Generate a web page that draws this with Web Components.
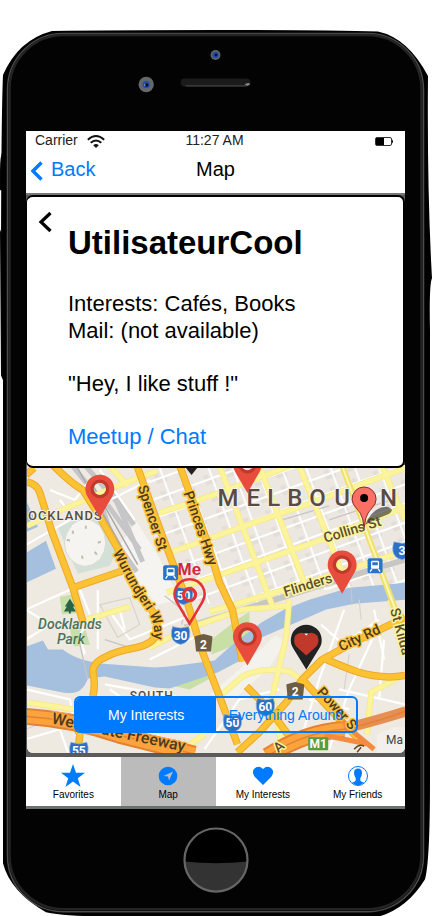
<!DOCTYPE html>
<html lang="en">
<head>
<meta charset="utf-8">
<meta name="viewport" content="width=device-width, initial-scale=1">
<title>Map</title>
<style>
body { margin: 0; background: #fff; font-family: "Liberation Sans", Arial, sans-serif; color: #000; }
</style>
</head>
<body>
<phone-shell>
  <status-bar carrier="Carrier" time="11:27 AM"></status-bar>
  <nav-bar back="Back">Map</nav-bar>
  <profile-card name="UtilisateurCool">
    <span slot="facts">Interests: Cafés, Books<br>Mail: (not available)</span>
    <span slot="quote">"Hey, I like stuff !"</span>
    <span slot="action">Meetup / Chat</span>
  </profile-card>
  <city-map>
    <segmented-control>
      <segment-button selected>My Interests</segment-button>
      <segment-button>Everything Around</segment-button>
    </segmented-control>
  </city-map>
  <tab-bar>
    <tab-item icon="star">Favorites</tab-item>
    <tab-item icon="locate" current>Map</tab-item>
    <tab-item icon="heart">My Interests</tab-item>
    <tab-item icon="person">My Friends</tab-item>
  </tab-bar>
</phone-shell>

<script>
const define = (name, render) => customElements.define(name, class extends HTMLElement {
  connectedCallback() {
    if (this.shadowRoot) return;
    this.attachShadow({ mode: "open" }).innerHTML = render(this);
  }
});

define("phone-shell", () => `
<style>
  :host { display: block; position: relative; }
  .casing { position: absolute; inset: 0; width: 100%; height: 100%; }
  .body { position: relative; display: flex; flex-direction: column; padding: 0 28px 0 26px; }
  .top, .bottom { display: flex; justify-content: center; }
  .top { height: 131px; }
  .screen { display: flex; flex-direction: column; background: #5b5b5b; border-bottom: 3px solid #6b716f; }
  .bottom { height: 108px; align-items: flex-start; }
  .home { margin-top: 18px; padding: 0; border: 0; background: none; width: 66px; height: 66px; }
  svg { display: block; }
</style>
<svg class="casing" viewBox="0 0 433 916" preserveAspectRatio="none" aria-hidden="true">
  <path d="M0 170 Q0 155 3 150 V190 H0ZM0 229 L4 240 V382 L1 375Z" fill="#050505"/>
  <path d="M52 31 Q110 30 216 30 Q330 30 378 31.500 Q408 38 428 76 Q427 190 432 278 Q429 284 430 330 V780 Q430 860 425 878 Q408 906 380 915 H100 Q66 915 46 911 Q10 890 3 862 V380 L1 290 Q1 120 3 75 Q18 40 52 31Z" fill="#000"/>
  <rect x="7.500" y="33.500" width="416" height="877" rx="56" fill="#040303" stroke="#4c4c4c" stroke-width="1.500"/>
  <rect x="9.500" y="35" width="412" height="873" rx="54" fill="none" stroke="#242424" stroke-width="2.500"/>
</svg>
<div class="body">
  <div class="top">
    <svg width="380" height="131" viewBox="26 0 380 131" aria-hidden="true">
      <circle cx="216" cy="55" r="5" fill="#606266"/><circle cx="216" cy="55" r="3.200" fill="#2450a8"/><circle cx="216.500" cy="55" r="1.500" fill="#050d22"/>
      <circle cx="146.500" cy="84.500" r="7.700" fill="#66676a"/><circle cx="146.500" cy="84.500" r="3.800" fill="#2450a8"/><circle cx="147" cy="85" r="1.800" fill="#050d22"/><circle cx="145" cy="85" r=".8" fill="#8fb4ee"/>
      <rect x="181" y="78.500" width="70" height="8" rx="4" fill="#1b1b1b"/>
      <path d="M186 86H247" stroke="#444" stroke-width="1.200"/><path d="M245 84l4-1 2 1-3 2z" fill="#888"/>
    </svg>
  </div>
  <div class="screen"><slot></slot></div>
  <div class="bottom">
    <button class="home" aria-label="Home">
      <svg width="66" height="66" viewBox="0 0 66 66"><circle cx="33" cy="33" r="31.500" fill="#000"/><path d="M1.500 34.500Q33 38 64.500 34.500A31.500 31.500 0 0 1 1.500 34.500Z" fill="#333"/><circle cx="33" cy="33" r="31.500" fill="none" stroke="#666" stroke-width="2.200"/></svg>
    </button>
  </div>
</div>`);

define("status-bar", el => `
<style>
  :host { display: grid; grid-template-columns: 1fr auto 1fr; align-items: center; height: 18px; padding: 0 11px 0 9px; background: #fff; font-size: 14px; line-height: 18px; color: #222; }
  .left { display: flex; align-items: center; gap: 9px; }
  .battery { justify-self: end; padding-top: 2px; }
  svg { display: block; }
</style>
<span class="left">${el.getAttribute("carrier")}
  <svg width="18" height="16" viewBox="0 -2 18 16" aria-hidden="true"><g fill="none" stroke="#111" stroke-width="1.900"><path d="M.8 5.800Q9-1.600 17.200 5.800"/><path d="M3.700 8.800Q9 4 14.300 8.800"/></g><path d="M6.200 11.200Q9 8.600 11.800 11.200L9 14Z" fill="#111"/></svg>
</span>
<span>${el.getAttribute("time")}</span>
<svg class="battery" width="19" height="9" viewBox="0 0 19 9" aria-hidden="true"><rect x=".5" y=".5" width="16" height="8" rx="1.500" fill="#fff" stroke="#333"/><path d="M1 1h8v7H1z"/><path d="M17 2.500q2 2 0 4z"/></svg>`);

define("nav-bar", el => `
<style>
  :host { display: grid; grid-template-columns: 1fr auto 1fr; align-items: start; height: 38px; padding: 6px 5px 0; box-sizing: content-box; background: #fff; font-size: 20px; line-height: 28px; border-bottom: 2px solid #777; }
  a { display: flex; align-items: center; gap: 8px; color: #007aff; text-decoration: none; }
  h1 { margin: 0; font: inherit; }
  svg { display: block; margin-top: 4px; }
</style>
<a href="#back"><svg width="12" height="20" viewBox="0 0 12 20" aria-hidden="true"><path d="M10.500 1.500L2 10l8.500 8.500" fill="none" stroke="#007aff" stroke-width="3.400"/></svg>${el.getAttribute("back")}</a>
<h1><slot></slot></h1>`);

define("profile-card", el => `
<style>
  :host { display: grid; grid-template-columns: 41px 1fr; position: relative; z-index: 1; margin-bottom: -3px; border: 2px solid #000; border-left-width: 1px; border-radius: 7px; background: #fff; font-size: 22px; line-height: 27px; padding-bottom: 16px; }
  button { align-self: start; justify-self: start; margin: 14px 0 0 11px; padding: 0; border: 0; background: none; }
  svg { display: block; }
  .text { display: flex; flex-direction: column; gap: 26px; padding-top: 28px; }
  h2 { margin: 0 0 3px; font-size: 33px; line-height: 36px; }
  a { color: #007aff; text-decoration: none; }
  p { margin: 0; }
</style>
<button aria-label="Close profile"><svg width="14" height="22" viewBox="0 0 14 22"><path d="M12.500 2L3 11l9.500 9" fill="none" stroke="#000" stroke-width="3.200"/></svg></button>
<div class="text">
  <h2>${el.getAttribute("name")}</h2>
  <p><slot name="facts"></slot></p>
  <p><slot name="quote"></slot></p>
  <a href="#chat"><slot name="action"></slot></a>
</div>`);

const orangeRoads = [
  "M27 482Q37 484 40 493L52 532L73 588L83 622",
  "M26 475L34 468",
  "M53 465Q72 484 83 490L100 517L117 547L133 583L150 607Q160 622 157 634Q154 644 137 648Q115 652 107 657Q93 663 93 672Q96 685 93 697",
  "M73 588L123 571",
  "M137 465L163 537L173 563L187 600L202 650L220 697L238 745",
  "M180 465L207 540L220 583L233 610L243 662",
  "M406 618Q385 628 360 640L323 660L303 680L287 703L260 733L238 753",
  "M325 659Q345 668 360 673Q385 680 406 676",
  "M303 680L343 723L358 738",
  "M247 687L270 710L296 745",
  "M71 718L80 735L78 753"
].map(d => `<path d="${d}"/>`).join("");

const yellowRoads = [
  "M27 526L60 511L120 485L157 471", "M110 466L128 486", "M160 513L220 493L293 465", "M173 552L220 535L320 500L406 468",
  "M167 593L215 577L323 540L406 507", "M210 612L310 583L406 551", "M87 620L130 607",
  "M220 466L273 606", "M260 466L307 588", "M300 466L343 573", "M383 466L406 520",
  "M290 600L287 637L273 697L283 750", "M220 697L243 677Q263 667 290 672L310 685",
  "M150 648L185 630L243 610L290 606", "M390 600L406 622", "M406 675L372 693L368 735", "M26 703L75 710", "M180 753L205 735"
].map(d => `<path d="${d}"/>`).join("");

const whiteRoads = [
  "M26 610L70 590L120 575", "M26 545L70 520", "M98 590V650", "M80 590L90 615", "M26 640L50 625L26 610", "M110 612L130 640L200 612", "M120 610L125 630",
  "M150 660L200 635", "M85 655L80 635L90 620", "M105 685L190 700", "M120 697L110 690", "M26 690L70 700L80 753", "M26 740L60 730L68 753",
  "M50 490L75 500L90 480", "M100 470L135 520", "M110 500L150 480", "M60 500L75 520",
  "M300 745L320 680L345 610", "M330 750L350 690L380 625", "M350 640L380 620", "M375 610L385 660", "M340 690L406 705", "M322 625L350 650", "M205 750L240 700L280 690", "M310 700L350 710", "M385 640L380 700"
].map(d => `<path d="${d}"/>`).join("");

const redPin = (x, y) => `<use href="#pin" x="${x}" y="${y}"/>`;
const shield = (x, y, n) => `<g transform="translate(${x} ${y})"><path d="M-8 -8Q0 -5 8 -8Q10 -3 9 2Q8 8 0 10Q-8 8 -9 2Q-10 -3 -8 -8Z" fill="#2f70c4" stroke="#8eb4e2" stroke-width=".7"/><text y="5" text-anchor="middle" class="num">${n}</text></g>`;
const routeTwo = (x, y) => `<g transform="translate(${x} ${y})"><path d="M-6 -8L0 -9.500L6 -8L9 -7L7.500 8H-7.500L-9 -7Z" fill="#6c5d43"/><text y="5" text-anchor="middle" class="num">2</text></g>`;
const station = (x, y) => `<g transform="translate(${x} ${y})"><rect x="-7.500" y="-7.500" width="15" height="15" rx="2" fill="#2774c8"/><rect x="-4" y="-5" width="8" height="8" rx="1.500" fill="#fff"/><path d="M-2.800 -3.500h5.600v3h-5.600z" fill="#2774c8"/><path d="M-3 3L-5 6M3 3L5 6" stroke="#fff" stroke-width="1.300"/></g>`;

define("city-map", () => `
<style>
  :host { display: grid; margin: 0 0 4px 1px; border-radius: 0 0 6px 6px; overflow: hidden; background: #eeeae2; }
  svg { grid-area: 1 / 1; display: block; width: 100%; height: auto; }
  .controls { grid-area: 1 / 1; align-self: end; justify-self: center; width: 75%; margin-bottom: 20px; z-index: 1; }
  text { font-family: Roboto, "Noto Sans", sans-serif; }
  .road { font-size: 14px; font-weight: 500; fill: #4c3a1c; paint-order: stroke; stroke-width: 3px; stroke: #fdc440; stroke-linejoin: round; }
  .pale { stroke: #fbf3a0; fill: #5c4e2c; }
  .place { font-weight: 500; fill: #574b43; paint-order: stroke; stroke: #f5f2ea; stroke-width: 2px; }
  .num { font-size: 12px; font-weight: 700; fill: #fff; }
  .me { font: 700 17px "Liberation Sans", Arial, sans-serif; fill: #d1263b; }
</style>
<svg viewBox="27 465 379 289" role="img" aria-label="Map of Melbourne">
  <defs>
    <pattern id="blocks" width="23" height="18" patternUnits="userSpaceOnUse" patternTransform="translate(220 466) rotate(-20)">
      <rect width="23" height="18" fill="#ece8e1"/><path d="M4 4h5v4h6v6H4z" fill="#e3ded7"/><path d="M0 9H23M12 0V18" stroke="#fff" stroke-width="1.800" fill="none"/>
    </pattern>
    <g id="pin"><path fill-rule="evenodd" d="M0 44L-12.500 22.500A14.500 14.500 0 1 1 12.500 22.500ZM0 8.500a6.500 6.500 0 1 0 .01 0Z" fill="#e74c3c"/><circle cy="15" r="7.800" fill="none" stroke="#c0392b" stroke-width="3.200"/></g>
    <path id="wurundjeri" d="M113 553L133 590L148 612Q156 624 154 640"/>
  </defs>
  <rect x="26" y="464" width="381" height="290" fill="#eeeae2"/>
  <path d="M140 465H406V590L310 590L240 610L187 600Z" fill="url(#blocks)"/>
  <path d="M137 522L158 555L180 600L158 605L135 580L120 545Z" fill="#f5f4f0"/>
  <path d="M58 528L80 517L100 520L116 553L110 566L78 574Z" fill="#d3e0d8"/>
  <path d="M60 597L76 594L82 613L62 615ZM70 629L86 631L90 645L74 647Z" fill="#c9dfaa"/>
  <path d="M172 686L200 673L216 676L190 690ZM212 640L238 620L250 612V640L212 655Z" fill="#c8dfa6"/>
  <path d="M26 500L38 527L26 532ZM26 553L46 541L56 569L26 583Z" fill="#a5bfde"/>
  <path d="M26 647L43 641L48 650L63 650Q75 660 100 664L155 668L170 667L215 661L232 646L262 623L285 610L310 600L350 588L385 585L406 583V600L355 604L327 610L290 626L262 638L243 660L218 673L170 689L155 688L105 677L88 679Q82 697 63 693L26 686Z" fill="#a5bfde"/>
  <path d="M210 695L240 670L276 636L286 642L270 668L235 700Z" fill="#f4f2ec"/>
  <path d="M72 525Q85 513 100 526Q112 543 100 560Q84 574 70 559Q58 543 72 525Z" fill="#f5f4f0" stroke="#d8d8cf"/>
  <path d="M73 531v3M86 526v3M101 542l-3 1M95 552l2 3M82 556l1 3M67 540l3 1" stroke="#b9c0a8" stroke-width="2"/>
  <g fill="none" stroke="#c6c6c8"><path d="M72 465L100 500L112 537L137 572M85 465L117 502L143 562M100 475L134 525M108 505L140 550" stroke-width="5"/><path d="M76 465L128 558M90 480L138 565" stroke="#aaaaae" stroke-width="1.500"/></g>
  <g fill="none" stroke="#c8c6c2"><path d="M185 628L260 605L320 586L406 560" stroke-width="6"/><path d="M165 596L185 612L182 625M330 520L360 510L400 498M105 640L130 648M353 605L352 588M80 645L88 680M283 520L330 506" stroke-width="1.300"/></g>
  <g fill="none" stroke="#fff" stroke-width="2.200">${whiteRoads}</g>
  <g fill="none" stroke="#d8d3ca" stroke-width="1.200"><path d="M100 605L130 598L140 625L118 638ZM320 720L340 705M350 655L345 690M360 600L362 620M26 730L50 720M115 740L140 715"/></g>
  <g fill="none" stroke="#f6e985" stroke-width="6">${yellowRoads}</g>
  <g fill="none" stroke="#fcf49a" stroke-width="4.500">${yellowRoads}</g>
  <path d="M343 466L400 620" stroke="#efe06e" stroke-width="6"/><path d="M343 466L400 620" stroke="#fbf7b4" stroke-width="2"/>
  <g fill="none" stroke="#eca92f" stroke-width="7.500" stroke-linejoin="round">${orangeRoads}</g>
  <g fill="none" stroke="#fdc232" stroke-width="5.500" stroke-linejoin="round">${orangeRoads}</g>
  <g fill="none"><path d="M26 717Q75 720 120 736L195 755M268 757Q305 733 345 730" stroke="#e58132" stroke-width="17"/><path d="M335 732Q375 722 407 712" stroke="#e58f55" stroke-width="10"/><path d="M26 717Q75 720 120 736L195 755M268 757Q305 733 345 730" stroke="#fba33c" stroke-width="13"/><path d="M26 717Q75 720 120 736L195 755M268 757Q305 733 345 730Q380 722 406 712" stroke="#e58132" stroke-width="1.500"/><path d="M340 718L358 736L375 750M325 736L370 745" stroke="#f58b3e" stroke-width="5"/></g>
  <path d="M378 735L396 728H406V754H378Z" fill="#f3f0ec" opacity=".85"/>

  <text class="place" x="28" y="520" font-size="13" letter-spacing="1">OCKLANDS</text>
  <text class="place" x="218 247 268 288 310 335 381" y="506" font-size="24" font-weight="700">MELBOUN</text>
  <text class="place" x="130" y="701" font-size="12" letter-spacing="1">SOUTH</text>
  <text x="70" y="629" text-anchor="middle" font-size="14" font-weight="500" font-style="italic" fill="#4b7358">Docklands<tspan x="71" dy="15">Park</tspan></text>
  <path d="M70 599L75 607H73L76 612H71V614H69V612H64L67 607H65Z" fill="#286548"/>
  <text class="road" transform="translate(138 487) rotate(72)">Spencer St</text>
  <text class="road" transform="translate(184 493) rotate(71)">Princes Hwy</text>
  <text class="road"><textPath href="#wurundjeri">Wurundjeri Way</textPath></text>
  <text class="road pale" transform="translate(326 543) rotate(-17)">Collins St</text>
  <text class="road pale" transform="translate(286 597) rotate(-17)">Flinders</text>
  <text class="road" transform="translate(342 652) rotate(-25)">City Rd</text>
  <text class="road" transform="translate(317 693) rotate(48)">Power S</text>
  <text class="road pale" transform="translate(391 610) rotate(75)">St Kilda</text>
  <text class="road" transform="translate(51 724) rotate(12)" style="stroke:#fba33c;font-size:16px">West Gate Freeway</text>
  <text class="road pale" transform="translate(279 754) rotate(-40)">A</text><path d="M355 750Q360 744 365 747M358 753L362 748" fill="none" stroke="#6b4a1c" stroke-width="1.500"/>
  <text x="387" y="745" font-size="12" fill="#444">Ma</text>
  ${station(171, 573)}${station(376, 566)}
  ${shield(184, 595, "50")}${shield(181, 635, "30")}${shield(79, 751, "55")}${shield(266, 707, "60")}${shield(233, 723, "50")}${shield(403, 550, "3")}
  ${routeTwo(204, 644)}${routeTwo(296, 692)}
  <rect x="309" y="738" width="20" height="13" rx="1" fill="#5a9b3c"/><text x="319" y="749" text-anchor="middle" class="num">M1</text>

  ${redPin(100, 474)}${redPin(248, 449)}${redPin(343, 550)}${redPin(248, 622)}
  <path d="M184 465H200L192 475Z" fill="#222"/>
  <path d="M307 670L294 649A15.500 15.500 0 1 1 320 649Z" fill="#222"/>
  <path d="M307 656L297 647Q293 642 296 636Q301 631 307 635Q313 631 318 636Q321 642 317 647Z" fill="#c0392b"/><path d="M305 634h4l-2 2z" fill="#fff"/>
  <path d="M366 525Q374 506 389 507Q397 510 388 515Q376 519 366 525Z" fill="#333" opacity=".65"/>
  <path d="M365 528L363.500 519Q362 513 357 508A12 12 0 1 1 373 508Q368 513 366.500 519Z" fill="#fb7065" stroke="#8c2c28"/><circle cx="365" cy="498" r="4"/>
  <path d="M190 624L177 602A15 15 0 1 1 203 602Z" fill="none" stroke="#e53238" stroke-width="2.600"/><circle cx="190" cy="595" r="6" fill="none" stroke="#e53238" stroke-width="3.200"/>
  <text class="me" x="178" y="575">Me</text>
</svg>
<div class="controls"><slot></slot></div>`);

define("segmented-control", () => `
<style>
  :host { display: flex; border: 2px solid #007aff; border-radius: 6px; overflow: hidden; }
</style><slot></slot>`);

define("segment-button", el => `
<style>
  :host { flex: 1; display: flex; }
  button { flex: 1; height: 33px; padding: 0; border: 0; background: none; font: 14px "Liberation Sans", Arial, sans-serif; white-space: nowrap; color: #007aff; }
  :host([selected]) button { background: #007aff; color: #fff; }
</style><button aria-pressed="${el.hasAttribute("selected")}"><slot></slot></button>`);

define("tab-bar", () => `
<style>:host { display: block; } nav { display: flex; background: #fff; }</style>
<nav><slot></slot></nav>`);

const icons = {
  star: `<path d="M12 0l3 8.800h9L16.800 14.200 19.500 23 12 17.600 4.500 23 7.200 14.200 0 8.800h9z"/>`,
  locate: `<circle cx="12" cy="12" r="9.300"/><path d="M17 7.500L13 16.500 12 12.500 7.500 12z" fill="#bbb"/>`,
  heart: `<path d="M12 21L3.500 12.500Q.5 8 3 5Q7.500 .5 12 5Q16.500 .5 21 5Q23.500 8 20.500 12.500Z"/>`,
  person: `<circle cx="12" cy="12" r="9.500" fill="#fff" stroke="#007aff"/><path d="M12 4.500Q16 4.500 16 9Q15.800 12 14.300 14V16.500Q15 18 18 18.500Q12 24 6 18.500Q9 18 9.700 16.500V14Q8.200 12 8 9Q8 4.500 12 4.500Z"/>`
};
define("tab-item", el => `
<style>
  :host { flex: 1; display: flex; }
  a { flex: 1; display: flex; flex-direction: column; align-items: center; gap: 1px; padding: 7px 0 5px; font-size: 10px; line-height: 12px; color: #000; text-decoration: none; }
  :host([current]) a { background: #bbb; }
  svg { display: block; fill: #007aff; }
</style>
<a href="#${el.getAttribute("icon")}"><svg width="24" height="24" viewBox="0 0 24 24" aria-hidden="true">${icons[el.getAttribute("icon")]}</svg><slot></slot></a>`);
</script>
</body>
</html>
